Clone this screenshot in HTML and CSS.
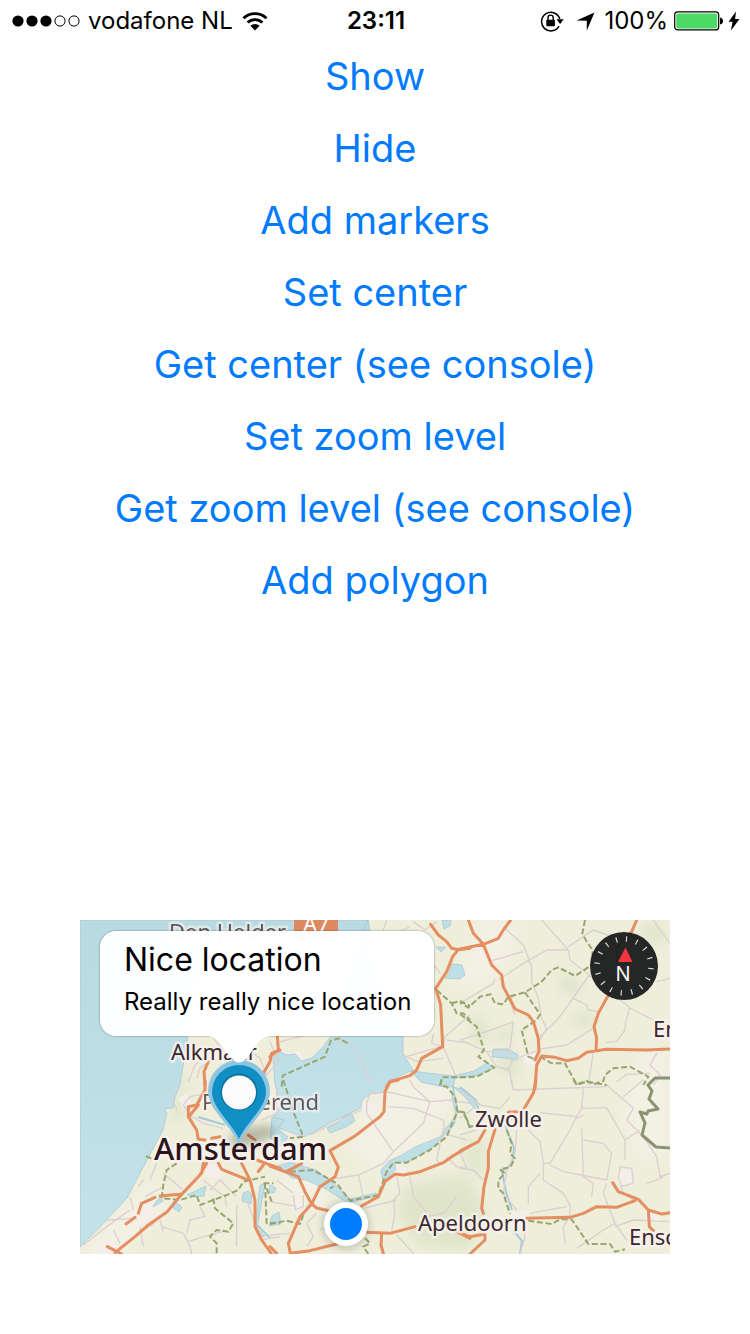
FILE: index.html
```html
<!DOCTYPE html>
<html lang="en">
<head>
<meta charset="utf-8">
<meta name="viewport" content="width=device-width, initial-scale=1">
<title>Map demo</title>
<link rel="stylesheet" href="styles.css">
</head>
<body>
<header class="status">
  <div class="status-side">
    <svg class="signal" width="68" height="12" viewBox="0 0 68 12" aria-hidden="true">
      <circle cx="6" cy="6" r="5.6"/><circle cx="20" cy="6" r="5.6"/><circle cx="34" cy="6" r="5.6"/>
      <g fill="none" stroke="#000"><circle cx="48" cy="6" r="5.1"/><circle cx="62" cy="6" r="5.1"/></g>
    </svg>
    <span>vodafone NL</span>
    <svg class="wifi" width="26" height="19" viewBox="0 0 26 19" aria-hidden="true">
      <g fill="none" stroke="#000" stroke-width="2.8"><path d="M1.5 6.2a16.5 16.5 0 0 1 23 0"/><path d="M5.6 10.6a10.6 10.6 0 0 1 14.8 0"/></g>
      <path d="M8.4 13.8a6.6 6.6 0 0 1 9.2 0L13 18.6z"/>
    </svg>
  </div>
  <time class="clock">23:11</time>
  <div class="status-side status-right">
    <svg width="24" height="22" viewBox="0 0 24 22" aria-hidden="true">
      <path d="M19 16.2A9.3 9.3 0 1 1 19.8 9" fill="none" stroke="#000" stroke-width="1.5"/>
      <path d="M16.5 9.3h7.2l-3.6 4.6z"/>
      <rect x="6.3" y="9.7" width="8.6" height="6.6" rx=".8"/>
      <path d="M8 10V7.7a2.6 2.6 0 0 1 5.2 0V10" fill="none" stroke="#000" stroke-width="1.4"/>
    </svg>
    <svg class="arrow" width="19" height="19" viewBox="0 0 19 19" aria-hidden="true"><path d="M18.5.5 10.8 18.5V8.8L.5 8.5z"/></svg>
    <span class="percent">100%</span>
    <svg class="battery" width="50" height="20" viewBox="0 0 50 20" aria-hidden="true">
      <rect x=".7" y=".9" width="44" height="18" rx="3" fill="#fff" stroke="#000" stroke-width="1.2"/>
      <rect x="2.2" y="2.4" width="41" height="15" rx="1.8" fill="#4cd964"/>
      <path d="M46 6.5q3 .5 3 3.500t-3 3.500z"/>
    </svg>
    <svg width="12" height="20" viewBox="0 0 12 20" aria-hidden="true"><path d="M8 .5.5 10.800h4L3 19.500 11.500 8h-4.400z"/></svg>
  </div>
</header>
<main class="page">
  <nav class="actions">
    <button type="button">Show</button>
    <button type="button">Hide</button>
    <button type="button">Add markers</button>
    <button type="button">Set center</button>
    <button type="button">Get center (see console)</button>
    <button type="button">Set zoom level</button>
    <button type="button">Get zoom level (see console)</button>
    <button type="button">Add polygon</button>
  </nav>
  <section class="map" aria-label="Map">
    <svg class="map-canvas" viewBox="0 0 590 334" preserveAspectRatio="xMinYMin slice">
      <defs>
        <linearGradient id="sea" x1="0" y1="0" x2="0" y2="1"><stop offset="0" stop-color="#b9dae1"/><stop offset="1" stop-color="#c3e2ea"/></linearGradient>
        <filter id="soft" x="-50%" y="-50%" width="200%" height="200%"><feGaussianBlur stdDeviation="6"/></filter>
        <filter id="shade" x="-50%" y="-50%" width="200%" height="200%"><feGaussianBlur stdDeviation="4"/></filter>
      </defs>
      <rect width="590" height="334" fill="#eeeeda"/>
      <g class="pale" filter="url(#soft)">
        <path d="M280 195 320 160 380 165 355 215 300 255 270 230zM400 0 440 0 430 40 400 70 370 60zM560 130h30v110h-30l-20-40zM0 334 70 260 90 290 40 334zM205 235 250 260 240 300 200 270z"/>
      </g>
      <g class="wood" filter="url(#soft)">
        <path d="M478 55 500 60 500 75 480 72zM495 92 515 95 513 108 492 105zM395 90 410 110 400 130 392 115zM415 112 430 108 432 120 420 123zM563 3 584 5 580 30 566 20zM330 265 385 255 405 290 390 330 340 325 315 290zM90 205 100 165 108 150 102 200zM385 220 405 225 402 260 388 245zM420 135h20v20h-20z"/>
      </g>
      <g class="town">
        <path d="M55 288 66 283 74 295 62 305 54 301zM15 325 30 318 40 334H12zM120 245h25l-5 14-12-3zM281 184l14-2 2 10-10 5zM210 282l10-1 3 8-10 4zM430 292l18-2 2 10-18 2zM198 128l14 6 8-4 3 10-22 4zM565 290l16 3-2 10-15-2zM538 252l14-3 2 13-13 6zM98 178l9-4 6 12-9 4zM312 245l15 3-4 8-12-2zM398 25l10 8-3 9-8-7zM445 132l15 4-5 10-12-4z"/>
      </g>
      <g fill="url(#sea)" stroke="#9dbdd0" stroke-width=".6">
        <path d="M0 0H288V12L248 30 180 12 140 16 120 60 108 116 100 165 95 177 93 188 84 189 87 193 83 210 67 240 47 278 20 307 0 327z"/>
        <path d="M193 138 200 132 208 135 215 134 222 141 232 138 243 127 248 120 255 112 262 60 288 0 300 60 323 100V134L333 150 310 160 306 172 290 174 282 180 281 188 250 203 224 217 210 212 199 208 194 195 201 185 195 165z"/>
      </g>
      <g class="lake">
        <path d="M331 151 373 156 394 151 407 143 415 148 398 155 375 158 373 167 364 167 341 162zM373 166 378 190 374 205 352 228 330 241 314 243 316 249 303 262 301 250 309 241 322 235 335 227 360 217 376 195 372 178zM373 167 385 170 399 189 396 190 382 174z"/>
        <path d="M210 242 236 250 252 262 270 279 296 273 298 276 268 283 246 269 226 260 212 258 198 246zM247 208 257 203 265 196 272 194 275 201 266 207 250 213zM192 197l12 3-6 9 10 8-6 9-12-8zM107 275l19-9-2 10-10 1zM94 281l8 6-3 5-6-4zM163 273l5-2 4 4-1 9-9-3zM192 296l7-4 2 12-12 2zM190 265l6 3-2 5-5-1zM180 265l5-1-8 44 8 8-2 1-8-8zM76 282l4-5 3 4-10 6zM362 0h9l-1 6-6 3zM356 27l10 0-5 5zM372 44l10 1 3 10-5 4-15-1 4-5zM413 129l15 0 10 6-1 5-12-2-13-1z"/>
      </g>
      <g class="river"><path d="M425 205 434 228 432 244 422 251 426 272 432 290M433 310 442 321 440 334M380 167 396 180 400 195M118 197 145 205M177 305 190 318"/></g>

      <g class="minor">
        <g transform="translate(0 -5) scale(.33333)"><path d="M325 500 345 450 372 425M350 490 360 460 400 430M570 380 595 440 560 480 540 430M400 370 420 395 440 430M500 400 540 430"/></g>
        <g transform="translate(190 -5) scale(.33333)"><path d="M70 15 76 45M340 45 350 15M430 20 465 45 500 20M492 150 510 175M30 380 110 360M190 372 240 385 270 430 305 510M490 355 485 385 520 395 560 490M520 395 525 365 600 300M530 375 600 385M410 425 510 395M400 420 440 440 520 430M420 35 390 50"/></g>
        <g transform="translate(380 -5) scale(.33333)"><path d="M135 40 190 90 215 155 215 200 235 250 245 310 260 340 240 375M245 15 325 105 330 135 400 190M95 137 190 110M0 265 100 205 105 190M115 195 190 145 260 105 325 105M325 95 370 65 400 45 470 70M388 180 300 305 240 365M240 402 320 390 400 340M340 250 380 270 385 285 420 290M480 255 520 285 580 315M510 275 497 320 495 345 470 380 435 382M0 375 80 350 160 320 150 400 155 440M0 375 80 410 110 455 145 465 160 435 235 405M80 410 150 408M400 410 385 510M150 465 155 510M165 300 150 260 160 240M590 415 570 450 600 480 580 510M470 500 500 478 570 475M580 15 630 85M590 200 630 190"/></g>
        <g transform="translate(0 160) scale(.33333)"><path d="M310 75 330 50 380 40M310 75 335 110 370 130 430 145M380 240 350 300 260 395M255 395 210 440M245 440 310 460 330 500 335 522M80 420 170 415M10 495 80 440 150 390M370 300 400 325 435 350 440 380M390 330 420 300 470 350M470 375V500M360 380 375 410 330 420 320 460M150 350 160 390M195 350 250 320M210 300 230 250M175 320 190 300M240 420 250 455M100 450 120 490M270 30 290 90M545 120 590 100 590 20M500 360 540 470M250 280 310 330M430 455 370 470 325 485M600 470 540 480M180 440 190 500"/></g>
        <g transform="translate(190 160) scale(.33333)"><path d="M290 70 300 40 350 35 480 65 540 60M420 0 430 20 480 65 460 130 370 215 340 250 265 285 200 295M370 215 290 100 290 70M355 80 430 85 520 120 525 150M265 285 280 350M275 90 120 165M540 60 600 70M520 145 500 240 510 250M530 230 560 260 600 268M520 160 590 180M380 290 390 340 370 360M420 290 430 350 480 410M280 385 380 360M370 360 375 400 365 455M470 410 520 400 560 350M70 345 75 390 100 380 100 345M0 365 80 380M115 370 90 430M140 400 110 430 130 470 110 500M150 450 200 430M0 465 60 460M380 465 430 520M20 300 70 340"/></g>
        <g transform="translate(380 160) scale(.33333)"><path d="M155 0 160 30 440 20M370 25 365 85 350 110 240 98M350 110 330 150 270 250 250 250 240 185 200 145M170 150 165 220 140 270 130 340 170 390M365 145 370 290 400 310 395 350M250 250 250 300 310 340 330 375 330 410 310 440 315 490M270 255 310 275 440 300M440 300 455 220 430 190 370 180M350 115 370 105M365 85 440 83 495 180 540 150M495 180V240M440 15 520 85 500 120 550 170 590 230 600 290 630 280M440 310 430 340 465 430 430 450 350 505M465 430 500 480M465 440 520 420 630 425M210 400 320 380M205 370 205 320 240 280M0 30 60 75 120 85 150 50M0 265 40 270 70 300M0 215 20 265M550 0 490 50M480 300 490 340 520 360M475 300 480 260 515 265 520 310 480 320M190 420 195 470 180 522M60 70 0 115M0 165 50 150M560 310 590 300 610 290"/></g>
      </g>

      <g class="trail">
        <g transform="translate(190 -5) scale(.33333)"><path d="M35 515 38 482 165 425 182 378 205 370 240 388M500 225 545 265 560 295 580 295 600 315M545 265 570 258 600 272M512 510 515 487 600 487"/></g>
        <g transform="translate(380 -5) scale(.33333)"><path d="M375 15 367 55 380 80 398 105 395 150 345 183 295 157 275 165 245 200 195 232 145 245 130 268 105 265 92 238 60 245 25 278 0 262M195 232 240 298 230 315 185 345 205 425 230 435 M240 425 275 445 315 445 350 508 380 498 400 508 430 498 435 480 460 460 510 455 565 485 550 510M0 297 50 335 72 405 55 425 103 458 50 485 0 487"/></g>
        <g transform="translate(0 160) scale(.33333)"><path d="M198 228 215 236M290 250 260 270 250 315 245 355 300 360 350 345 360 375 440 345 475 330 490 305 555 290M400 355 405 385 460 430 445 455 410 450 390 470 410 490V522M550 310 580 310M555 310 560 430 600 428M560 325 575 365"/></g>
        <g transform="translate(190 160) scale(.33333)"><path d="M40 0 70 95 100 170 60 175M60 275 130 270 200 310 240 362 325 345 350 275 370 248 410 248 480 210 530 170 562 95 555 50 530 20 510 15 515 0M562 95 580 95 600 145M180 325 190 320M0 432 50 422 90 432 100 405M285 475 300 490 280 500 295 522"/></g>
        <g transform="translate(380 160) scale(.33333)"><path d="M0 95 12 97 30 140 60 135M340 0 350 15 380 5 440 15M140 150 155 190 150 220 165 235 150 262 120 268 135 280 115 300 115 325 130 340 150 402 M205 422 275 432 300 418 335 418 385 492 450 492 465 515 495 508"/></g>
      </g>
      <path class="border" d="M590 158H575L568 165 572 171 569 179 578 189 568 191 567 194 560 192 565 203 562 215 576 227 590 228"/>

      <g class="road">
        <g transform="translate(0 -5) scale(.33333)"><path d="M375 510 372 470 385 440M600 405 575 415 570 440 550 475 545 500"/></g>
        <g transform="translate(190 -5) scale(.33333)"><path d="M22 362 25 405 0 425M482 28 505 60 530 80 545 100 565 104 600 100M565 104 548 125 530 170 497 220 512 270 518 395 455 430 440 465 420 482 360 500 350 515"/></g>
        <g transform="translate(380 -5) scale(.33333)"><path d="M25 15 40 55 70 88 95 150 125 180 130 215 165 282 205 300 220 320 235 370 237 410 225 435M0 102 70 88 115 70 130 45 152 15M225 520 230 450 245 423 285 427 320 437 355 430 380 412 440 403 560 405 630 402M530 15 515 50 470 100 475 190 440 250 415 295 402 335 410 370 408 405"/></g>
        <g transform="translate(0 160) scale(.33333)"><path d="M375 0 375 30 350 75 325 80 325 110 350 150 355 178 375 180M355 75 325 112M395 175 420 170M505 165 525 180M380 250 360 285 300 348 262 395 205 435 165 470 105 518 M82 500 125 522M300 343 240 348M225 352 185 370 175 400M165 412 138 432M370 250 365 280M415 250 425 268 500 298M485 250 510 300 525 360 525 440 545 480 575 522M530 240 600 265M550 255 535 275"/></g>
        <g transform="translate(190 160) scale(.33333)"><path d="M385 0 360 5 345 35 342 95 330 110 255 168 180 212 205 262 195 290 150 320 125 372 90 410 55 490 60 515M0 258 85 290 105 335 125 372 140 384 175 392M50 275 95 250M60 520 120 512 200 492M275 378 325 350 345 305 375 282 400 285 450 275 520 248 545 230 600 198M290 457 360 460 435 440M335 460 333 495 340 520M560 455 600 475M0 500 20 520"/></g>
        <g transform="translate(380 160) scale(.33333)"><path d="M228 0 220 40 190 90M0 213 55 185 75 150M105 148 85 215 85 265 72 320 65 385 70 400M145 97 175 95M200 415 330 412 370 400 410 380 470 382 525 362M458 308 475 335 535 358 565 390 605 402 630 398M565 390 568 440 580 452M0 460 30 470 75 462 75 480 30 522"/></g>
      </g>

      <rect x="214" width="44" height="20" fill="#de895f"/>
      <text class="road-name" x="223" y="12">A7</text>
      <g class="places">
        <text class="faded" x="89" y="20">Den Helder</text>
        <text x="91" y="140">Alkmaar</text>
        <text class="faded" x="122" y="190">Purmerend</text>
        <text x="395" y="207">Zwolle</text>
        <text x="338" y="311">Apeldoorn</text>
        <text x="549" y="325">Enschede</text>
        <text x="573" y="117">Emmen</text>
        <text class="capital" x="74" y="240">Amsterdam</text>
      </g>
      <ellipse cx="172" cy="216" rx="24" ry="9" transform="rotate(-15 172 216)" fill="#000" opacity=".22" filter="url(#shade)"/>
      <path d="M159 224C151 205 128 190 128 171a31 31 0 0 1 62 0C190 190 167 205 159 224z" fill="#8ec6e2"/>
      <path d="M159 219C152 203 132 188 132 172a27 27 0 0 1 54 0C186 188 166 203 159 219z" fill="#0f8fc4"/>
      <circle cx="159" cy="172" r="18.500" fill="#08729f"/>
      <circle cx="159" cy="172.500" r="17" fill="#fbfbfb"/>
      <circle cx="266" cy="305" r="23" fill="#000" opacity=".22" filter="url(#shade)"/>
      <circle cx="266" cy="304" r="22" fill="#fff"/>
      <circle cx="266" cy="304" r="16" fill="#007cff"/>
    </svg>
    <div class="callout">
      <h1>Nice location</h1>
      <p>Really really nice location</p>
      <svg class="callout-tip" width="64" height="27" viewBox="0 0 64 27" aria-hidden="true"><path d="M0 0C14 1 16 14 25 23Q32 30 39 23C48 14 50 1 64 0z"/></svg>
    </div>
    <button class="compass" type="button" aria-label="Point north">
      <svg width="68" height="68" viewBox="-34 -34 68 68" aria-hidden="true">
        <circle r="34" fill="#181b1b" fill-opacity=".94"/>
        <circle r="27" fill="none" stroke="#d9d9d9" stroke-width="5.500" stroke-dasharray="1.200 9.403" transform="rotate(-86)"/>
        <path d="M1.500-18.500 8.500-4H-6z" fill="#f4373d"/>
        <text x="-1" y="15" text-anchor="middle">N</text>
      </svg>
    </button>
  </section>
</main>
</body>
</html>
```
FILE: styles.css
```css
* {
  box-sizing: border-box;
}

body {
  margin: 0;
  min-height: 100vh;
  display: flex;
  flex-direction: column;
  background: #fff;
  color: #000;
  font-family: Inter, "Liberation Sans", sans-serif;
}

.status {
  display: grid;
  grid-template-columns: 1fr auto 1fr;
  align-items: center;
  height: 40px;
  padding: 0 10px 0 12px;
  font-size: 24px;
  line-height: 42px;
}

.status-side {
  display: flex;
  align-items: center;
  white-space: nowrap;
}

.status-right {
  justify-content: flex-end;
}

.signal {
  margin-right: 8px;
}

.wifi {
  margin-left: 9px;
}

.clock {
  font-weight: 600;
}

.arrow {
  margin: 0 9px 0 12px;
}

.battery {
  margin: 0 4px 0 6px;
}

.page {
  flex: 1;
  display: flex;
  flex-direction: column;
  justify-content: space-between;
  gap: 40px;
  padding-bottom: 80px;
}

.actions {
  display: flex;
  flex-direction: column;
}

.actions button {
  min-height: 72px;
  padding: 0;
  border: 0;
  background: none;
  color: #007aff;
  font: 400 38px/48px Inter, "Liberation Sans", sans-serif;
  cursor: pointer;
}

.map {
  position: relative;
  margin: 0 80px;
  overflow: hidden;
}

.map-canvas {
  display: block;
  width: 100%;
  height: 334px;
}

.pale {
  fill: #f3f0e4;
}

.wood {
  fill: #e0e5ca;
}

.town {
  fill: #f5efeb;
}

.lake {
  fill: #bfdfe7;
  stroke: #9dbdd0;
  stroke-width: 0.6;
}

.river {
  fill: none;
  stroke: #a5cbdc;
  stroke-width: 2;
}

.minor,
.trail,
.road,
.border {
  fill: none;
  stroke-linejoin: round;
}

.minor {
  stroke: #dbd0d1;
  stroke-width: 4;
}

.trail {
  stroke: #98a671;
  stroke-width: 6;
  stroke-dasharray: 18 8;
}

.border {
  stroke: #8a9472;
  stroke-width: 3;
}

.road {
  stroke: #e48e61;
  stroke-width: 9;
  stroke-linecap: round;
}

.places,
.road-name {
  font-family: "Noto Sans", "Open Sans", sans-serif;
  font-size: 22px;
}

.road-name {
  fill: #fff;
}

.places {
  fill: #3d2830;
  stroke: #f7f3ef;
  stroke-opacity: 0.8;
  stroke-width: 5;
  stroke-linejoin: round;
  paint-order: stroke;
}

.faded {
  opacity: 0.75;
}

.capital {
  fill: #2c131b;
  font-size: 31px;
  font-weight: 500;
}

.callout {
  position: absolute;
  top: 11px;
  left: 20px;
  width: 334px;
  padding: 9px 24px 18px;
  border-radius: 16px;
  background: rgba(255, 255, 255, 0.98);
  box-shadow: 0 0 2px rgba(0, 0, 0, 0.5);
  white-space: nowrap;
}

.callout h1 {
  margin: 0;
  font-size: 32px;
  font-weight: 400;
  line-height: 40px;
}

.callout p {
  margin: 6px 0 0;
  font-size: 24px;
  line-height: 32px;
}

.callout-tip {
  position: absolute;
  top: 100%;
  left: 107px;
  fill: #fff;
}

.compass {
  position: absolute;
  top: 12px;
  right: 12px;
  width: 68px;
  height: 68px;
  padding: 0;
  border: 0;
  border-radius: 50%;
  background: none;
}

.compass svg {
  display: block;
}

.compass text {
  fill: #f2f2f2;
  font: 400 20px Inter, sans-serif;
}
```
